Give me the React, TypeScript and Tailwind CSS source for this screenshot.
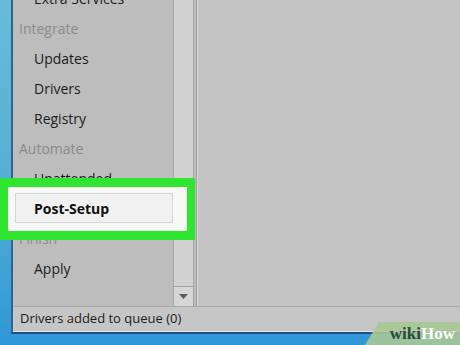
import type { ReactNode } from 'react'

const font = { fontFamily: '"Segoe UI", "Open Sans", sans-serif' }

function Heading({ children }: { children: ReactNode }) {
  return <div className="flex h-[30px] items-center pl-[6px] text-[14px] text-[#8b8b8b]">{children}</div>
}

function Item({ children }: { children: ReactNode }) {
  return <div className="flex h-[30px] items-center pl-[21px] text-[14px] text-[#1c1c1c]">{children}</div>
}

export default function App() {
  return (
    <div
      className="relative flex h-[345px] w-[460px] flex-col overflow-hidden bg-gradient-to-b from-[#66bcd8] via-[#55b0d6] to-[#2f97d6]"
      style={font}
    >
      {/* window */}
      <div className="ml-[11px] flex flex-1 flex-col border-l-2 border-b-2 border-l-[#35608f] border-b-[#1f4f86] bg-[#c4c4c4]">
        <div className="flex flex-1 border-b border-[#a9a9a9]">
          {/* sidebar */}
          <div className="w-[160px] bg-[#bdbdbd]">
            <div className="-mt-[17px] flex flex-col">
              <Item>Extra Services</Item>
              <Heading>Integrate</Heading>
              <Item>Updates</Item>
              <Item>Drivers</Item>
              <Item>Registry</Item>
              <Heading>Automate</Heading>
              <Item>Unattended</Item>
              <div className="relative z-20 ml-[2px] flex h-[30px] items-center border border-[#d6d6d6] bg-[#f1f1f1] pl-[18px] text-[14px] font-bold text-[#111]">
                Post-Setup
              </div>
              <Heading>Finish</Heading>
              <Item>Apply</Item>
            </div>
          </div>

          {/* scrollbar */}
          <div className="flex w-[21px] flex-col justify-end border-x border-[#a6a6a6] bg-[#d2d2d2]">
            <div className="flex h-[20px] items-center justify-center border-t border-[#a6a6a6] bg-[#d6d6d6]">
              <svg width="9" height="5" viewBox="0 0 9 5">
                <path d="M0 0h9L4.5 5z" fill="#5a5a5a" />
              </svg>
            </div>
          </div>
          <div className="w-[2px] bg-[#bcbcbc]" />
          <div className="w-px bg-[#9d9d9d]" />
          <div className="w-px bg-[#d8d8d8]" />

          {/* content */}
          <div className="flex-1 bg-[#c4c4c4]" />
        </div>

        {/* status bar */}
        <div className="flex h-[25px] items-center border-b border-[#dfe6ee] bg-[#c6c6c6] pl-[7px] text-[13px] text-[#1c1c1c]">
          Drivers added to queue (0)
        </div>
      </div>
      <div className="h-[11px]" />

      {/* highlight */}
      <div className="absolute left-0 top-[178px] z-10 h-[62px] w-[195px] border-y-[9px] border-x-[8px] border-[#2fe52f] bg-[#f7f9f7]" />

      {/* watermark */}
      <div className="absolute bottom-0 right-0 z-30 flex h-[23px] w-[95px] items-center justify-end pr-[5px] [clip-path:polygon(14px_0,100%_0,100%_100%,0_100%)] bg-[#a9c896]/90">
        <span className="text-[17px] font-bold leading-none" style={{ fontFamily: '"Liberation Serif", serif' }}>
          <span className="text-[#2c4a3a]">wiki</span>
          <span className="text-white">How</span>
        </span>
      </div>
    </div>
  )
}
